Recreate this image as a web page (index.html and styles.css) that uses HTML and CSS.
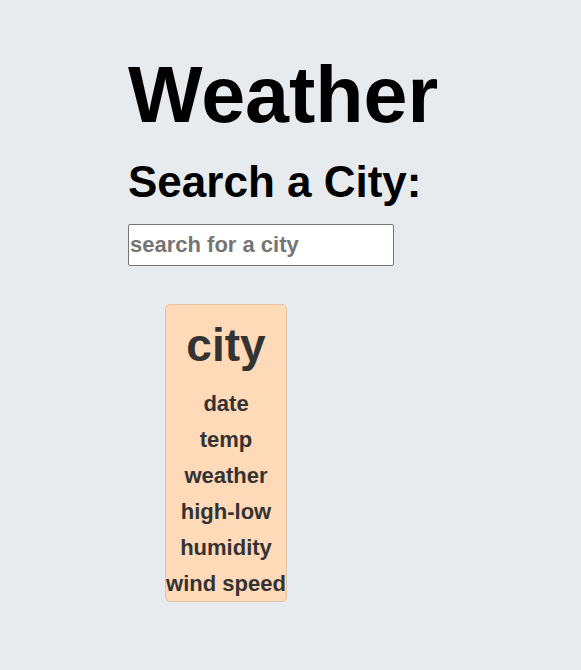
FILE: index.html
```html
<!DOCTYPE html>
<html>
<head>
<meta charset="utf-8">
<link rel="stylesheet" href="styles.css">
</head>
<body>
<main class="page">
  <h1 class="title">Weather</h1>
  <h2 class="subtitle">Search a City:</h2>
  <input class="search" type="text" placeholder="search for a city">
  <section class="cards">
    <div class="card">
      <h3 class="city">city</h3>
      <p class="item">date</p>
      <p class="item">temp</p>
      <p class="item">weather</p>
      <p class="item">high-low</p>
      <p class="item">humidity</p>
      <p class="item">wind speed</p>
    </div>
  </section>
</main>
</body>
</html>
```
FILE: styles.css
```css
html, body {
  margin: 0;
  background: #e8ebee;
}
body {
  font-family: "Liberation Sans", Arial, sans-serif;
  font-weight: bold;
}
.page {
  padding: 50px 0 0 128px;
  display: flex;
  flex-direction: column;
  align-items: flex-start;
}
.title {
  margin: 0;
  font-size: 79px;
  line-height: 90px;
  color: #000;
}
.subtitle {
  margin: 17px 0 0;
  font-size: 44px;
  line-height: 50px;
  color: #000;
}
.search {
  margin: 17px 0 0;
  box-sizing: border-box;
  width: 266px;
  height: 42px;
  padding: 0 1px;
  border: 1px solid #767676;
  border-radius: 2px;
  background: #fff;
  font-family: "Liberation Sans", Arial, sans-serif;
  font-weight: bold;
  font-size: 22px;
}
.search::placeholder {
  color: #757575;
}
.cards {
  margin: 38px 0 0 37px;
  display: flex;
}
.card {
  box-sizing: border-box;
  width: 122px;
  height: 298px;
  background: #ffdab9;
  border: 1px solid #e6c2a2;
  border-radius: 5px;
  text-align: center;
  color: #333;
  display: flex;
  flex-direction: column;
}
.city {
  margin: 0;
  font-size: 46px;
  line-height: 81px;
}
.item {
  margin: 0;
  font-size: 22px;
  line-height: 36px;
  white-space: nowrap;
}
```
